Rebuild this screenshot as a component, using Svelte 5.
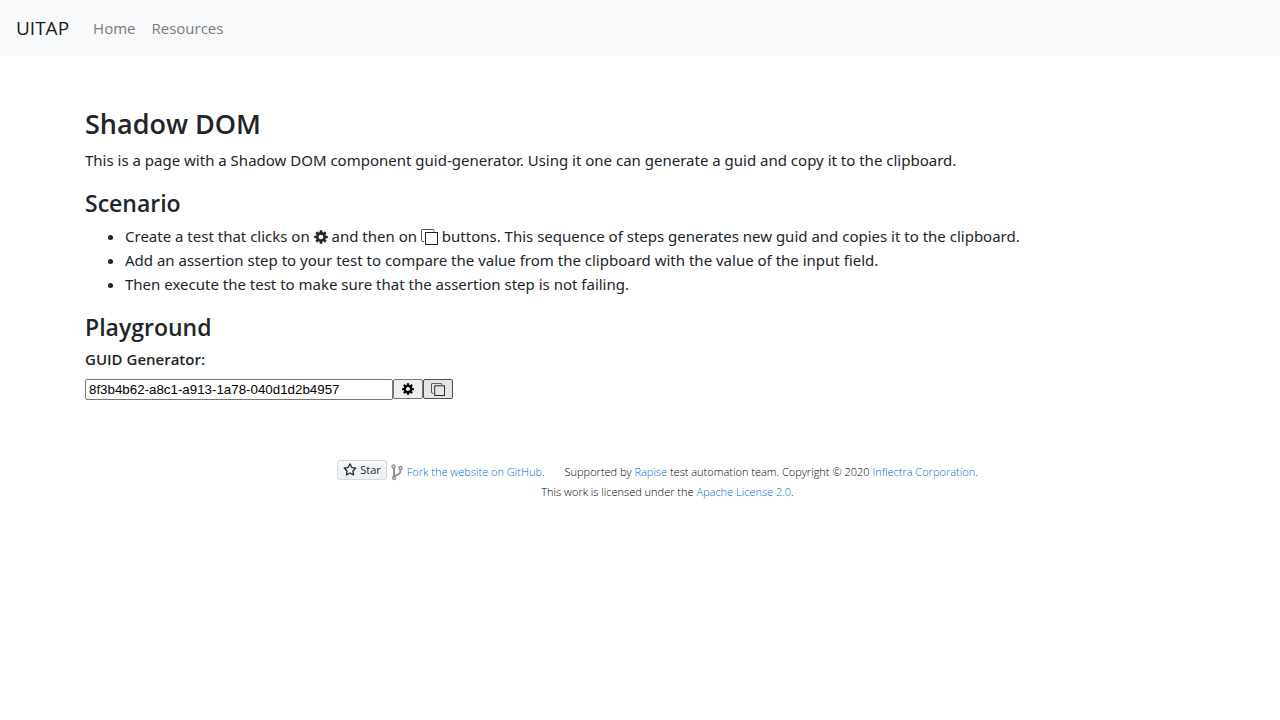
<script>
  let guid = $state('8f3b4b62-a8c1-a913-1a78-040d1d2b4957');

  const teeth = [0, 45, 90, 135];

  function generate() {
    guid = 'xxxxxxxx-xxxx-xxxx-xxxx-xxxxxxxxxxxx'.replace(/x/g, () =>
      Math.floor(Math.random() * 16).toString(16)
    );
  }

  function copy() {
    navigator.clipboard?.writeText(guid);
  }
</script>

{#snippet gear()}
  <svg class="gear" viewBox="0 0 16 16" fill="none" stroke="currentColor" aria-hidden="true">
    <circle cx="8" cy="8" r="4.2" stroke-width="3" />
    {#each teeth as angle}
      <path d="M8 .3v3M8 12.7v3" stroke-width="3" transform="rotate({angle} 8 8)" />
    {/each}
  </svg>
{/snippet}

{#snippet clone()}
  <svg class="clone" viewBox="0 0 17 16" fill="none" stroke="currentColor" aria-hidden="true">
    <path d="M3 12.5H1.5a1 1 0 0 1-1-1v-10a1 1 0 0 1 1-1h10.500a1 1 0 0 1 1 1v1" opacity="0.8" />
    <rect x="4.5" y="3.5" width="12" height="12" />
  </svg>
{/snippet}

<nav>
  <a class="brand" href="#home">UITAP</a>
  <a href="#home">Home</a>
  <a href="#resources">Resources</a>
</nav>

<main>
  <h1>Shadow DOM</h1>
  <p>This is a page with a Shadow DOM component guid-generator. Using it one can generate a guid and copy it to the clipboard.</p>
  <h2>Scenario</h2>
  <ul>
    <li>Create a test that clicks on {@render gear()} and then on {@render clone()} buttons. This sequence of steps generates new guid and copies it to the clipboard.</li>
    <li>Add an assertion step to your test to compare the value from the clipboard with the value of the input field.</li>
    <li>Then execute the test to make sure that the assertion step is not failing.</li>
  </ul>
  <h2>Playground</h2>
  <label for="guid">GUID Generator:</label>
  <div class="generator">
    <input id="guid" type="text" bind:value={guid} />
    <button type="button" aria-label="Generate" onclick={generate}>{@render gear()}</button>
    <button type="button" class="copy" aria-label="Copy" onclick={copy}>{@render clone()}</button>
  </div>
</main>

<footer>
  <div class="line">
    <div class="github">
      <a class="star" href="#star">
        <svg viewBox="0 0 16 16" fill="currentColor" aria-hidden="true">
          <path fill-rule="evenodd" d="M8 .25a.75.75 0 0 1 .673.418l1.882 3.815 4.21.612a.75.75 0 0 1 .416 1.279l-3.046 2.97.719 4.192a.75.75 0 0 1-1.088.791L8 12.347l-3.766 1.98a.75.75 0 0 1-1.088-.79l.72-4.194L.818 6.374a.75.75 0 0 1 .416-1.28l4.21-.611L7.327.668A.75.75 0 0 1 8 .25zm0 2.445L6.615 5.5a.75.75 0 0 1-.564.41l-3.097.45 2.24 2.184a.75.75 0 0 1 .216.664l-.528 3.084 2.769-1.456a.75.75 0 0 1 .698 0l2.77 1.456-.53-3.084a.75.75 0 0 1 .216-.664l2.24-2.183-3.096-.45a.75.75 0 0 1-.564-.41L8 2.694z" />
        </svg>
        <span>Star</span>
      </a>
      <svg class="fork" viewBox="0 0 12 17" fill="none" stroke="currentColor" aria-hidden="true">
        <circle cx="2.5" cy="2.5" r="1.5" stroke-width="1.4" />
        <circle cx="9.5" cy="4" r="1.5" stroke-width="1.4" />
        <circle cx="3" cy="14" r="1.5" stroke-width="1.4" />
        <path stroke-width="2" d="M3 4v8.500M9.500 5.500c0 4-1 5-6 6.500" />
      </svg>
      <span><a href="#fork">Fork the website on GitHub</a>.</span>
    </div>
    <span>Supported by <a href="#rapise">Rapise</a> test automation team. Copyright © 2020 <a href="#inflectra">Inflectra Corporation</a>.</span>
  </div>
  <div>This work is licensed under the <a href="#license">Apache License 2.0</a>.</div>
</footer>

<style>
  :global(body) {
    background: #fff;
    color: #212529;
    font: 400 15px/24px "Noto Sans", "Open Sans", sans-serif;
  }
  a { color: #007bff; text-decoration: none; }
  nav {
    display: flex;
    align-items: center;
    gap: 16px;
    height: 56px;
    padding: 0 16px;
    background: #f8f9fa;
    font-family: "Open Sans", sans-serif;
  }
  nav a { color: #7c7c7d; }
  nav .brand { margin-right: 8px; color: #191919; font-size: 19px; }
  main, footer {
    box-sizing: border-box;
    max-width: 1140px;
    margin: 0 auto;
    padding: 0 15px;
  }
  main { padding-top: 50px; }
  h1, h2, label { font-family: "Open Sans", sans-serif; font-weight: 600; }
  h1 { margin: 0 0 6px; font-size: 27px; line-height: 36px; }
  h2 { margin: 0 0 6px; font-size: 23px; line-height: 30px; }
  p { margin: 0 0 16px; }
  ul { margin: 0 0 16px; padding-left: 40px; }
  label { display: block; margin-bottom: 9px; font-size: 15px; line-height: 22px; }
  .gear { width: 14px; height: 14px; vertical-align: -2px; }
  .clone { width: 17px; height: 16px; vertical-align: -3px; }
  .generator { display: flex; }
  input {
    box-sizing: border-box;
    width: 308px;
    height: 21px;
    padding: 1px 3px;
    border: 1px solid #767676;
    border-radius: 2px;
    background: #fff;
    color: #000;
    font-family: "Liberation Sans", Arial, sans-serif;
  }
  button {
    display: flex;
    box-sizing: border-box;
    align-items: center;
    justify-content: center;
    width: 30px;
    height: 20px;
    padding: 0;
    border: 1px solid #767676;
    border-radius: 2px;
    background: #efefef;
    color: #000;
  }
  .copy { border-color: #4f4f4f; background: #e5e5e5; }
  button .gear { width: 12px; height: 12px; }
  button .clone { width: 14px; height: 13px; }
  footer {
    margin-top: 60px;
    padding-left: 70px;
    color: #000;
    font-family: "Open Sans", sans-serif;
    font-size: 11px;
    font-weight: 300;
    line-height: 20px;
    text-align: center;
  }
  footer a { color: #006ae6; }
  .line { display: flex; justify-content: center; gap: 20px; height: 22px; padding-right: 20px; line-height: 24px; }
  .github { display: flex; gap: 4px; }
  .star {
    display: flex;
    box-sizing: border-box;
    align-items: center;
    gap: 3px;
    height: 20px;
    padding: 0 5px;
    border: 1px solid #d5d8da;
    border-radius: 3px;
    background: linear-gradient(#f6f8fa, #ebf0f4);
    color: #24292f;
    font-weight: 500;
    line-height: 18px;
  }
  .star svg { width: 14px; height: 14px; }
  .fork { width: 12px; height: 17px; margin-top: 4px; color: #909090; }
</style>
